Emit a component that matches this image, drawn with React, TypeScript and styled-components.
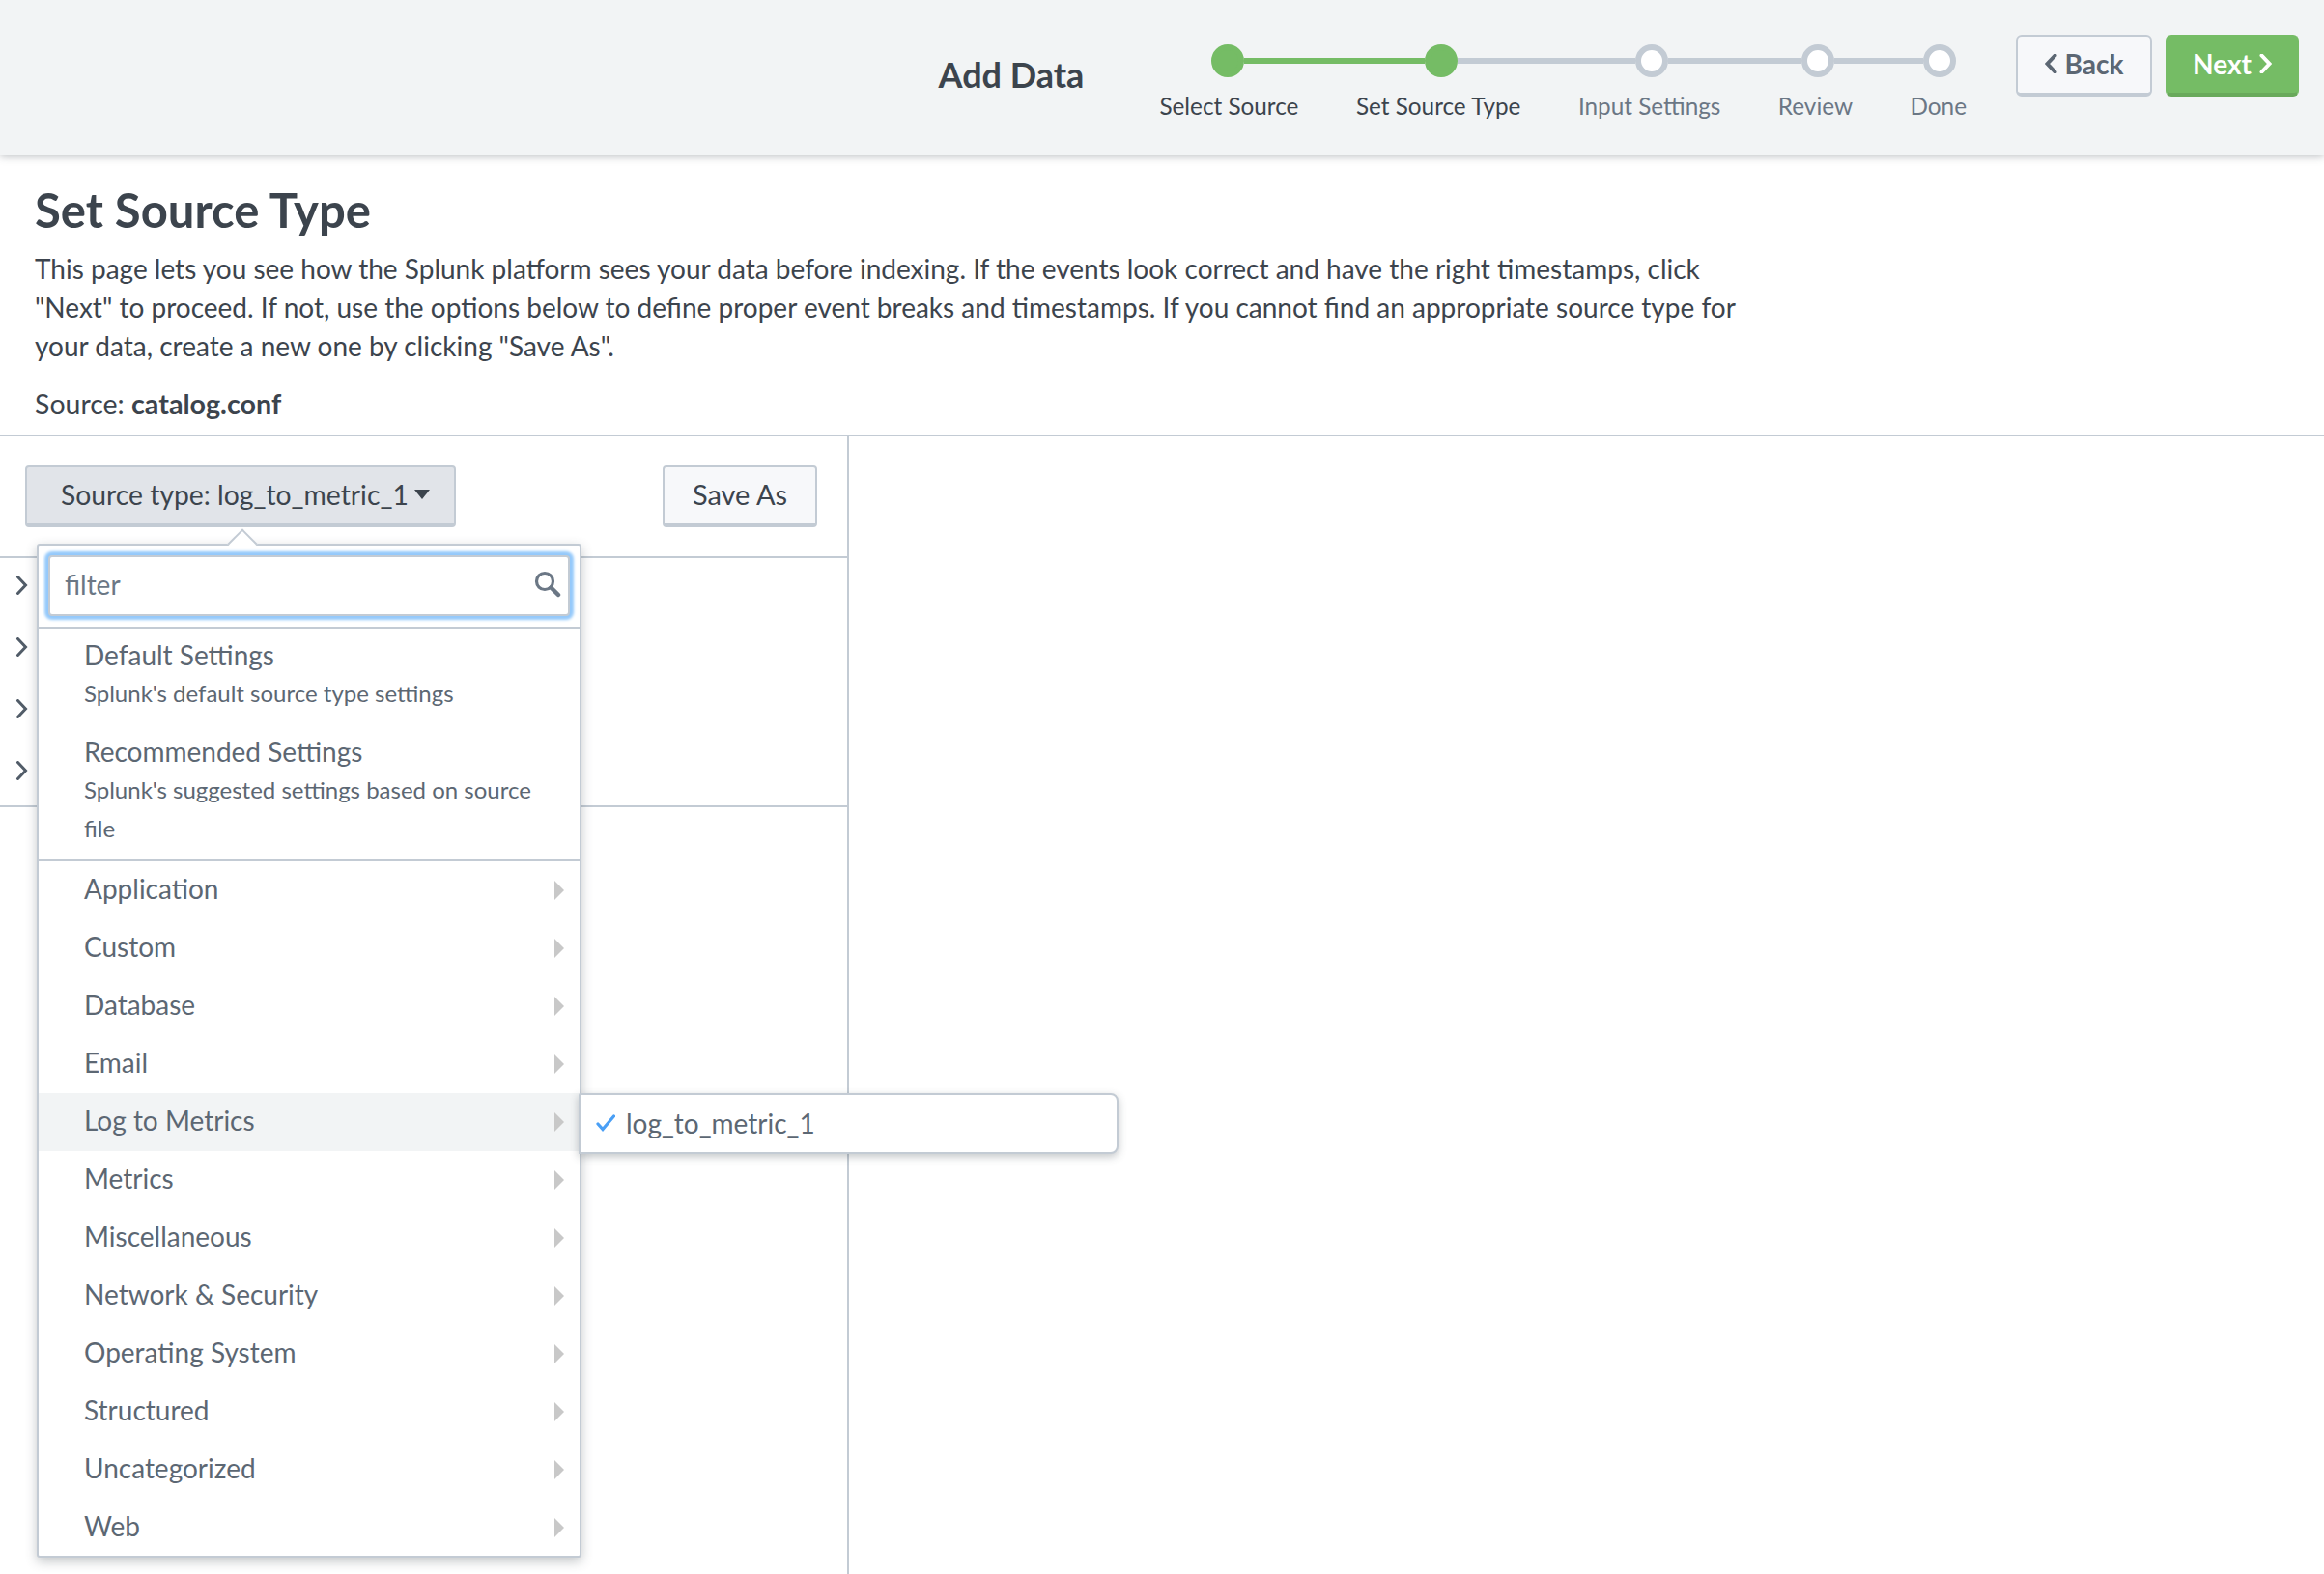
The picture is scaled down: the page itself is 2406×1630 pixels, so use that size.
import { FC, ReactElement } from 'react';
import styled, { createGlobalStyle } from 'styled-components';

const GlobalStyle = createGlobalStyle`
    html, body {
        margin: 0;
        padding: 0;
        background: #fff;
    }
    body {
        width: 2406px;
        height: 1630px;
        overflow: hidden;
        font-family: Lato, "Open Sans", sans-serif;
        color: #3c444d;
    }
    * {
        box-sizing: border-box;
    }
`;

const Header = styled.header`
    height: 160px;
    background: #f2f4f5;
    box-shadow: 0 2px 8px rgba(60, 68, 77, 0.35);
    display: flex;
    justify-content: flex-end;
    padding: 36px 26px 0 0;
    position: relative;
`;

const HeaderTitle = styled.div`
    font-size: 36px;
    font-weight: 700;
    line-height: 40px;
    margin-top: 21px;
    margin-right: 78px;
`;

const Steps = styled.div`
    display: flex;
    flex-direction: column;
    margin-right: 51px;
`;

const Track = styled.div`
    display: flex;
    align-items: center;
    height: 34px;
    margin-top: 10px;
    padding-left: 54px;
`;

const Dot = styled.span<{ $done?: boolean }>`
    width: 34px;
    height: 34px;
    border-radius: 50%;
    flex: none;
    background: ${(p) => (p.$done ? '#75bc65' : '#fff')};
    border: 6px solid ${(p) => (p.$done ? '#75bc65' : '#c3cbd4')};
`;

const Line = styled.span<{ $done?: boolean; $width: number }>`
    height: 6px;
    flex: none;
    width: ${(p) => p.$width}px;
    background: ${(p) => (p.$done ? '#75bc65' : '#c3cbd4')};
`;

const Labels = styled.div`
    display: flex;
    gap: 59.5px;
    margin-top: 15px;
`;

const StepLabel = styled.span<{ $done?: boolean }>`
    font-size: 24.3px;
    line-height: 30px;
    white-space: nowrap;
    color: ${(p) => (p.$done ? '#3c444d' : '#6b7785')};
`;

const Buttons = styled.div`
    display: flex;
    gap: 14px;
`;

const NavButton = styled.div<{ $primary?: boolean }>`
    height: 64px;
    width: ${(p) => (p.$primary ? 138 : 141)}px;
    display: flex;
    align-items: center;
    justify-content: center;
    gap: 8px;
    border-radius: 6px;
    font-size: 28px;
    font-weight: 700;
    padding-bottom: 2px;
    color: ${(p) => (p.$primary ? '#fff' : '#5c6773')};
    background: ${(p) => (p.$primary ? '#75bc65' : '#f7f8fa')};
    border: 2px solid ${(p) => (p.$primary ? '#75bc65' : '#c3cbd4')};
    border-bottom: 4px solid ${(p) => (p.$primary ? '#69a95b' : '#c3cbd4')};
`;

const Intro = styled.section`
    padding: 29px 36px 0;
    height: 292px;
    border-bottom: 2px solid #c3cbd4;
`;

const PageTitle = styled.h1`
    margin: 0;
    font-size: 49px;
    font-weight: 700;
    line-height: 56px;
`;

const Description = styled.p`
    margin: 13px 0 0;
    width: 1800px;
    font-size: 28px;
    line-height: 40px;
`;

const SourceLine = styled.p`
    margin: 20px 0 0;
    font-size: 28.5px;
    line-height: 40px;

    strong {
        font-size: 28.7px;
        font-weight: 700;
    }
`;

const Workspace = styled.main`
    position: relative;
    height: 1178px;
`;

const LeftPanel = styled.div`
    width: 879px;
    height: 100%;
    border-right: 2px solid #c3cbd4;
`;

const Toolbar = styled.div`
    height: 126px;
    display: flex;
    justify-content: space-between;
    align-items: flex-start;
    padding: 30px 31px 0 26px;
    border-bottom: 2px solid #c3cbd4;
`;

const SourceTypeButton = styled.div`
    height: 64px;
    width: 446px;
    display: flex;
    align-items: center;
    gap: 6px;
    padding: 0 0 2px 35px;
    font-size: 28.3px;
    border-radius: 4px;
    color: #3c444d;
    background: #e1e4e9;
    border: 2px solid #c3cbd4;
    border-bottom-width: 4px;
`;

const SaveButton = styled.div`
    height: 64px;
    width: 160px;
    display: flex;
    align-items: center;
    justify-content: center;
    padding-bottom: 4px;
    font-size: 29px;
    border-radius: 4px;
    color: #3c444d;
    background: #f7f8fa;
    border: 2px solid #c3cbd4;
    border-bottom-width: 4px;
`;

const Caret = styled.span`
    width: 0;
    height: 0;
    border-left: 8px solid transparent;
    border-right: 8px solid transparent;
    border-top: 10px solid #3c444d;
`;

const Rows = styled.div`
    height: 258px;
    border-bottom: 2px solid #c3cbd4;
`;

const Row = styled.div`
    height: 64px;
    padding: 18px 0 0 16px;
    color: #515c68;
    line-height: 0;
`;

const Popover = styled.div`
    position: absolute;
    left: 38px;
    top: 111px;
    width: 564px;
    height: 1050px;
    background: #fff;
    border: 2px solid #c3cbd4;
    border-radius: 3px;
    box-shadow: 0 4px 12px rgba(60, 68, 77, 0.3);

    &::before {
        content: '';
        position: absolute;
        left: 200px;
        top: -13px;
        width: 20px;
        height: 20px;
        background: #fff;
        border-left: 2px solid #c3cbd4;
        border-top: 2px solid #c3cbd4;
        transform: rotate(45deg);
    }
`;

const FilterArea = styled.div`
    position: relative;
    height: 86px;
    padding: 10px 10px 0;
    border-bottom: 2px solid #c3cbd4;
`;

const FilterInput = styled.div`
    height: 63px;
    display: flex;
    align-items: center;
    justify-content: space-between;
    padding: 0 7px 3px 15px;
    font-size: 28px;
    color: #6b7785;
    background: #fff;
    border: 2px solid #c3cbd4;
    border-radius: 4px;
    box-shadow: 0 0 3px 4px #94c9fb;
`;

const Presets = styled.div`
    height: 241px;
    padding-top: 7px;
    border-bottom: 2px solid #c3cbd4;
`;

const Preset = styled.div`
    padding: 0 30px 0 47px;
    margin-bottom: 20px;
`;

const PresetName = styled.div`
    font-size: 28px;
    line-height: 40px;
    color: #5c6773;
`;

const PresetNote = styled.div`
    font-size: 24px;
    line-height: 40px;
    color: #5c6773;
`;

const MenuItem = styled.div<{ $active?: boolean }>`
    height: 60px;
    display: flex;
    align-items: center;
    justify-content: space-between;
    padding: 0 16px 4px 47px;
    font-size: 28px;
    color: #5c6773;
    background: ${(p) => (p.$active ? '#f2f4f5' : 'transparent')};
`;

const MenuList = styled.div`
    padding-top: 0;
`;

const ItemArrow = styled.span`
    width: 0;
    height: 0;
    margin-top: 4px;
    border-top: 10px solid transparent;
    border-bottom: 10px solid transparent;
    border-left: 10px solid #c8c8c8;
`;

const Submenu = styled.div`
    position: absolute;
    left: 599px;
    top: 680px;
    width: 559px;
    height: 63px;
    display: flex;
    align-items: center;
    gap: 11px;
    padding: 0 0 2px 16px;
    font-size: 28px;
    color: #5c6773;
    background: #fff;
    border: 2px solid #c3cbd4;
    border-radius: 2px 8px 8px 0;
    box-shadow: 0 3px 8px rgba(60, 68, 77, 0.3);
`;

const ChevronIcon: FC<{ left?: boolean; weight?: number }> = ({
    left,
    weight = 3,
}): ReactElement => (
    <svg width="13" height="20" viewBox="0 0 13 20" fill="none">
        <path
            d={left ? 'M10.5 1.5 2.5 10l8 8.5' : 'M2.5 1.5l8 8.5-8 8.5'}
            stroke="currentColor"
            strokeWidth={weight}
            strokeLinecap="round"
            strokeLinejoin="miter"
        />
    </svg>
);

const SearchIcon: FC = (): ReactElement => (
    <svg width="28" height="28" viewBox="0 0 28 28" fill="none">
        <circle cx="11" cy="11" r="8.5" stroke="#6b7785" strokeWidth="3.2" />
        <path d="M17.5 17.5 25 25" stroke="#6b7785" strokeWidth="4.5" strokeLinecap="round" />
    </svg>
);

const CheckIcon: FC = (): ReactElement => (
    <svg width="20" height="18" viewBox="0 0 20 18" fill="none">
        <path d="M2 10 7 15.5 18.5 2" stroke="#4a9ff5" strokeWidth="3.2" strokeLinecap="round" />
    </svg>
);

const categories = [
    'Application',
    'Custom',
    'Database',
    'Email',
    'Log to Metrics',
    'Metrics',
    'Miscellaneous',
    'Network & Security',
    'Operating System',
    'Structured',
    'Uncategorized',
    'Web',
];

const App: FC = (): ReactElement => {
    return (
        <>
            <GlobalStyle />
            <Header>
                <HeaderTitle>Add Data</HeaderTitle>
                <Steps>
                    <Track>
                        <Dot $done />
                        <Line $done $width={187} />
                        <Dot $done />
                        <Line $width={184} />
                        <Dot />
                        <Line $width={138} />
                        <Dot />
                        <Line $width={92} />
                        <Dot />
                    </Track>
                    <Labels>
                        <StepLabel $done>Select Source</StepLabel>
                        <StepLabel $done>Set Source Type</StepLabel>
                        <StepLabel>Input Settings</StepLabel>
                        <StepLabel>Review</StepLabel>
                        <StepLabel>Done</StepLabel>
                    </Labels>
                </Steps>
                <Buttons>
                    <NavButton>
                        <ChevronIcon left weight={4} />
                        Back
                    </NavButton>
                    <NavButton $primary>
                        Next
                        <ChevronIcon weight={4} />
                    </NavButton>
                </Buttons>
            </Header>
            <Intro>
                <PageTitle>Set Source Type</PageTitle>
                <Description>
                    This page lets you see how the Splunk platform sees your data before indexing. If the
                    events look correct and have the right timestamps, click "Next" to proceed. If not, use
                    the options below to define proper event breaks and timestamps. If you cannot find an
                    appropriate source type for your data, create a new one by clicking "Save As".
                </Description>
                <SourceLine>
                    Source: <strong>catalog.conf</strong>
                </SourceLine>
            </Intro>
            <Workspace>
                <LeftPanel>
                    <Toolbar>
                        <SourceTypeButton>
                            Source type: log_to_metric_1
                            <Caret />
                        </SourceTypeButton>
                        <SaveButton>Save As</SaveButton>
                    </Toolbar>
                    <Rows>
                        {[0, 1, 2, 3].map((row) => (
                            <Row key={row}>
                                <ChevronIcon />
                            </Row>
                        ))}
                    </Rows>
                </LeftPanel>
                <Popover>
                    <FilterArea>
                        <FilterInput>
                            filter
                            <SearchIcon />
                        </FilterInput>
                    </FilterArea>
                    <Presets>
                        <Preset>
                            <PresetName>Default Settings</PresetName>
                            <PresetNote>Splunk's default source type settings</PresetNote>
                        </Preset>
                        <Preset>
                            <PresetName>Recommended Settings</PresetName>
                            <PresetNote>Splunk's suggested settings based on source file</PresetNote>
                        </Preset>
                    </Presets>
                    <MenuList>
                        {categories.map((name) => (
                            <MenuItem key={name} $active={name === 'Log to Metrics'}>
                                {name}
                                <ItemArrow />
                            </MenuItem>
                        ))}
                    </MenuList>
                </Popover>
                <Submenu>
                    <CheckIcon />
                    log_to_metric_1
                </Submenu>
            </Workspace>
        </>
    );
};

export default App;
